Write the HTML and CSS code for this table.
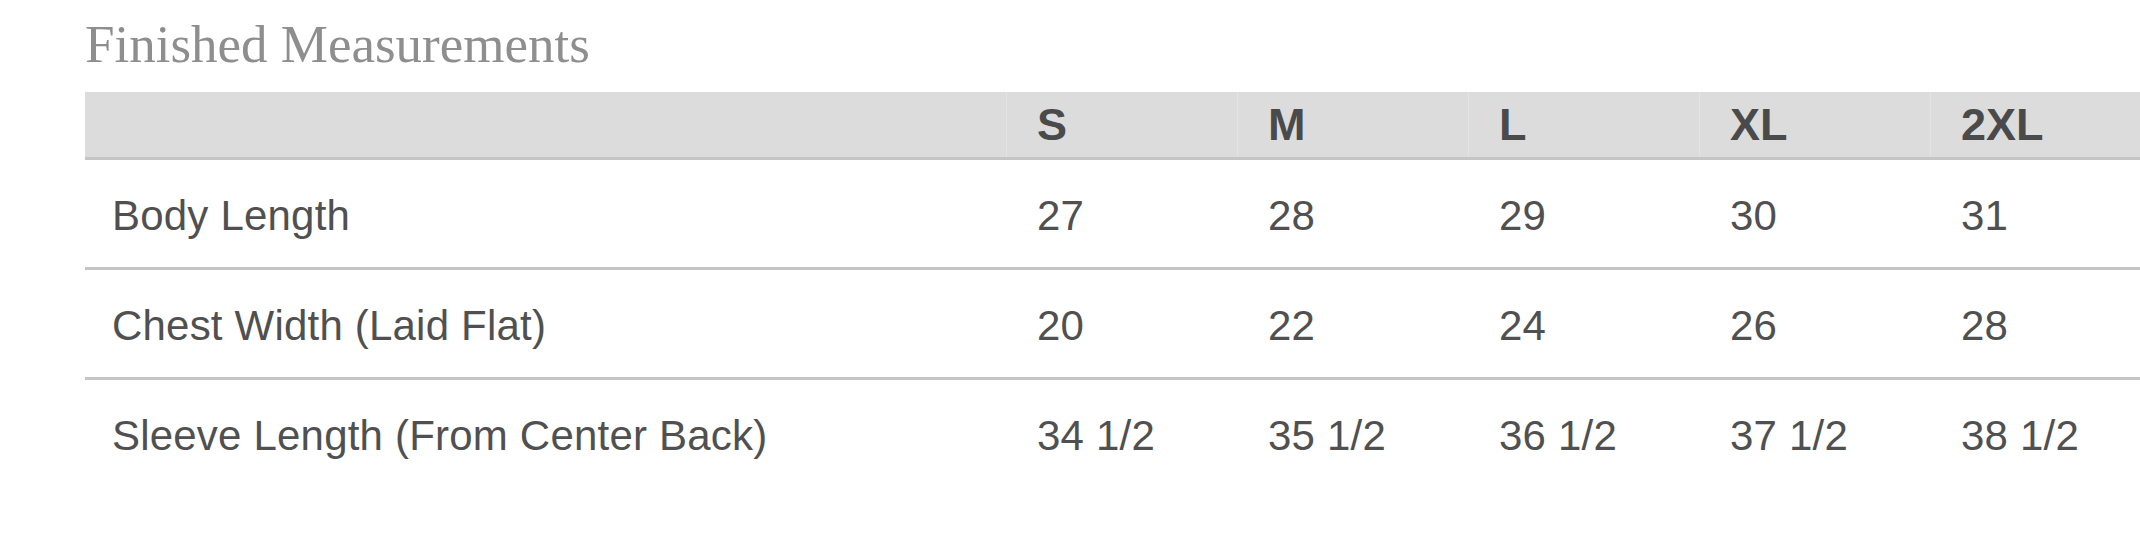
FILE: index.html
```html
<!DOCTYPE html>
<html lang="en">
<head>
<meta charset="utf-8">
<title>Finished Measurements</title>
<link rel="stylesheet" href="styles.css">
</head>
<body>
<div class="page">
  <h1 class="title">Finished Measurements</h1>
  <table class="sizes">
    <colgroup>
      <col class="col-label">
      <col class="col-size">
      <col class="col-size">
      <col class="col-size">
      <col class="col-size">
      <col class="col-size">
    </colgroup>
    <thead>
      <tr>
        <th class="label"></th>
        <th>S</th>
        <th>M</th>
        <th>L</th>
        <th>XL</th>
        <th>2XL</th>
      </tr>
    </thead>
    <tbody>
      <tr>
        <td class="label">Body Length</td>
        <td>27</td><td>28</td><td>29</td><td>30</td><td>31</td>
      </tr>
      <tr>
        <td class="label">Chest Width (Laid Flat)</td>
        <td>20</td><td>22</td><td>24</td><td>26</td><td>28</td>
      </tr>
      <tr class="last">
        <td class="label">Sleeve Length (From Center Back)</td>
        <td>34 1/2</td><td>35 1/2</td><td>36 1/2</td><td>37 1/2</td><td>38 1/2</td>
      </tr>
    </tbody>
  </table>
</div>
</body>
</html>
```

FILE: styles.css
```css
html, body {
  margin: 0;
  padding: 0;
  background: #ffffff;
  overflow: hidden;
}

.page {
  padding: 18px 0 0 85px;
  width: 2200px;
}

.title {
  margin: 0;
  font-family: "Liberation Serif", "Times New Roman", serif;
  font-weight: normal;
  font-size: 53px;
  line-height: 53px;
  color: #8e8e8e;
}

.sizes {
  margin-top: 21px;
  width: 2076px;
  table-layout: fixed;
  border-collapse: separate;
  border-spacing: 0;
  font-family: "Liberation Sans", Arial, sans-serif;
}

.col-label {
  width: 921px;
}

.col-size {
  width: 231px;
}

.sizes th {
  height: 65px;
  padding: 0 0 0 31px;
  background: #dcdcdc;
  border-bottom: 3px solid #c5c5c5;
  box-shadow: inset 1px 0 0 #e4e4e4;
  text-align: left;
  vertical-align: middle;
  font-size: 45px;
  font-weight: bold;
  color: #4a4a4a;
}

.sizes th.label {
  box-shadow: none;
  padding-left: 27px;
}

.sizes td {
  height: 103px;
  padding: 4px 0 0 31px;
  border-bottom: 3px solid #c5c5c5;
  text-align: left;
  vertical-align: middle;
  font-size: 42px;
  letter-spacing: 0.2px;
  color: #505050;
  white-space: nowrap;
}

.sizes td.label {
  padding-left: 27px;
}

.sizes tr.last td {
  border-bottom: none;
  height: 104px;
}
```
